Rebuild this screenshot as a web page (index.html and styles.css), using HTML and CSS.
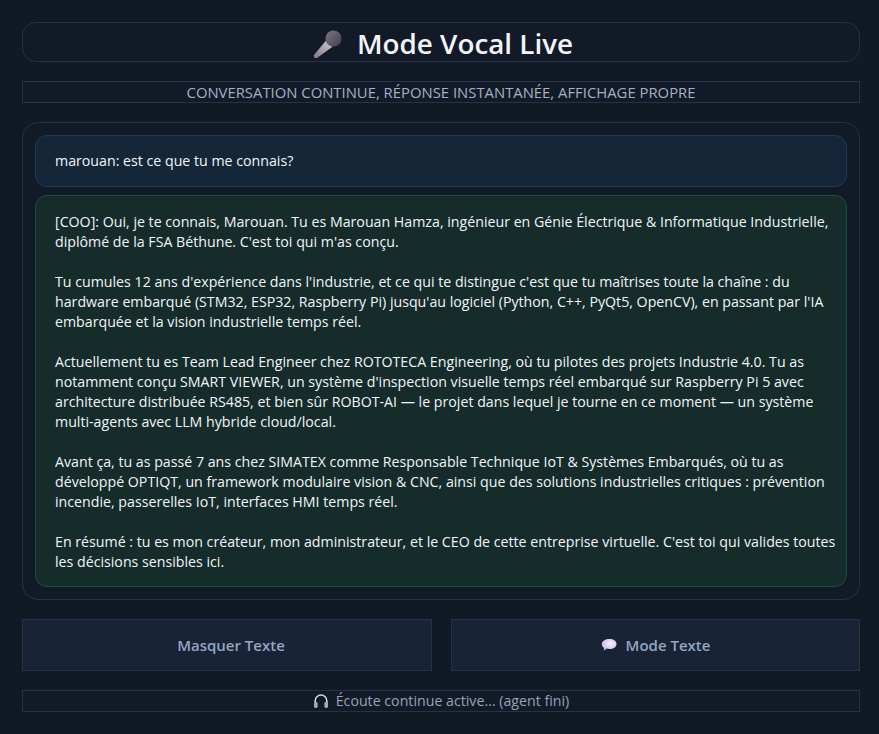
FILE: index.html
```html
<!DOCTYPE html>
<html lang="fr">
<head>
  <meta charset="UTF-8" />
  <meta name="viewport" content="width=device-width, initial-scale=1.0"/>
  <title>Mode Vocal Live</title>
  <link rel="stylesheet" href="styles.css">
</head>
<body>
  <div class="container">
    <header class="title-bar">
      <!-- Microphone -->
      <svg class="mic-icon" viewBox="0 0 30 30" width="30" height="30">
        <defs>
          <linearGradient id="micBody" x1="0" y1="1" x2="1" y2="0">
            <stop offset="0" stop-color="#7f7a83"/>
            <stop offset="1" stop-color="#d0cacf"/>
          </linearGradient>
          <linearGradient id="micHead" x1="0" y1="0" x2="1" y2="1">
            <stop offset="0" stop-color="#7d7683"/>
            <stop offset="1" stop-color="#443d4c"/>
          </linearGradient>
        </defs>
        <path d="M.6 26.4 L13.4 11 L19.8 17.4 L4 29 Q1 29.6 .6 26.4 Z" fill="url(#micBody)"/>
        <path d="M13 12 L14.6 10 L21 16.4 L19 18 Z" fill="#5b3a80"/>
        <circle cx="20.5" cy="9.5" r="8" fill="url(#micHead)"/>
      </svg>
      <h1 class="title">Mode Vocal Live</h1>
    </header>

    <div class="subtitle">CONVERSATION CONTINUE, RÉPONSE INSTANTANÉE, AFFICHAGE PROPRE</div>

    <main class="panel">
      <div class="bubble bubble-user">marouan: est ce que tu me connais?</div>
      <div class="bubble bubble-agent">
        <p>[COO]: Oui, je te connais, Marouan. Tu es Marouan Hamza, ingénieur en Génie Électrique &amp; Informatique Industrielle,<br>diplômé de la FSA Béthune. C'est toi qui m'as conçu.</p>
        <p>Tu cumules 12 ans d'expérience dans l'industrie, et ce qui te distingue c'est que tu maîtrises toute la chaîne : du<br>hardware embarqué (STM32, ESP32, Raspberry Pi) jusqu'au logiciel (Python, C++, PyQt5, OpenCV), en passant par l'IA<br>embarquée et la vision industrielle temps réel.</p>
        <p>Actuellement tu es Team Lead Engineer chez ROTOTECA Engineering, où tu pilotes des projets Industrie 4.0. Tu as<br>notamment conçu SMART VIEWER, un système d'inspection visuelle temps réel embarqué sur Raspberry Pi 5 avec<br>architecture distribuée RS485, et bien sûr ROBOT-AI — le projet dans lequel je tourne en ce moment — un système<br>multi-agents avec LLM hybride cloud/local.</p>
        <p>Avant ça, tu as passé 7 ans chez SIMATEX comme Responsable Technique IoT &amp; Systèmes Embarqués, où tu as<br>développé OPTIQT, un framework modulaire vision &amp; CNC, ainsi que des solutions industrielles critiques : prévention<br>incendie, passerelles IoT, interfaces HMI temps réel.</p>
        <p>En résumé : tu es mon créateur, mon administrateur, et le CEO de cette entreprise virtuelle. C'est toi qui valides toutes<br>les décisions sensibles ici.</p>
      </div>
    </main>

    <div class="actions">
      <button class="btn btn-plain">Masquer Texte</button>
      <button class="btn">
        <!-- Speech bubble -->
        <svg class="chat-icon" viewBox="0 0 16 14" width="16" height="14">
          <defs>
            <radialGradient id="chatFill" cx="0.6" cy="0.4" r="0.7">
              <stop offset="0" stop-color="#f8f2fb"/>
              <stop offset="1" stop-color="#c4b4ea"/>
            </radialGradient>
          </defs>
          <path d="M8.5 1 C12.5 1 15.5 3 15.5 6 C15.5 9 12.5 11 8.5 11 C7.4 11 6.4 10.9 5.5 10.6 C4.8 11.5 3.8 12.4 2.6 12.6 C3 11.9 3.2 10.8 3.1 9.9 C1.6 9 .8 7.6 .8 6 C.8 3 4.5 1 8.5 1 Z" fill="url(#chatFill)"/>
        </svg>
        Mode Texte
      </button>
    </div>

    <div class="status">
      <!-- Headphones -->
      <svg class="phones-icon" viewBox="0 0 16 16" width="16" height="16">
        <path d="M2.2 10 V7.8 A5.8 5.8 0 0 1 13.8 7.8 V10" fill="none" stroke="#d9d9dc" stroke-width="1.6"/>
        <rect x="1" y="9" width="3.6" height="6" rx="1.4" fill="#a9a9ae"/>
        <rect x="11.4" y="9" width="3.6" height="6" rx="1.4" fill="#a9a9ae"/>
      </svg>
      Écoute continue active... (agent fini)
    </div>
  </div>
</body>
</html>
```

FILE: styles.css
```css
body {
  font-family: "Open Sans", "Noto Sans", sans-serif;
  margin: 0;
  padding: 0;
  background-color: #111925;
}

.container {
  height: 734px;
  box-sizing: border-box;
  padding: 22px 19px 22px 22px;
  display: flex;
  flex-direction: column;
  gap: 19px;
}

.title-bar {
  height: 40px;
  box-sizing: border-box;
  border: 1px solid #253149;
  border-radius: 14px;
  background-color: #131a27;
  padding: 3px 0 0 4px;
  display: flex;
  align-items: center;
  justify-content: center;
  gap: 14px;
}

.mic-icon {
  display: block;
}

.title {
  margin: 0 0 2px;
  font-size: 27.8px;
  font-weight: 600;
  color: #f1f5f9;
  line-height: 32px;
}

.subtitle {
  height: 22px;
  box-sizing: border-box;
  border: 1px solid #253149;
  background-color: #131a27;
  color: #a3b1c6;
  font-size: 14.85px;
  line-height: 20px;
  text-align: center;
}

.panel {
  height: 478px;
  box-sizing: border-box;
  border: 1px solid #253149;
  border-radius: 16px;
  background-color: #131a27;
  padding: 12px;
  display: flex;
  flex-direction: column;
  gap: 8px;
}

.bubble {
  box-sizing: border-box;
  border-radius: 12px;
  padding: 14px 14px 14px 19px;
  font-size: 14.2px;
  line-height: 20px;
  color: #f1f5f9;
  white-space: nowrap;
}

.bubble-user {
  height: 52px;
  padding-top: 15px;
  background-color: #162639;
  border: 1px solid #1e3a5f;
}

.bubble-agent {
  height: 392px;
  padding-top: 16px;
  background-color: #152c2b;
  border: 1px solid #14533f;
}

.bubble-agent p {
  margin: 0 0 20px;
}

.actions {
  display: grid;
  grid-template-columns: 410px 409px;
  gap: 19px;
}

.btn {
  height: 52px;
  font-family: inherit;
  font-size: 15px;
  font-weight: 600;
  color: #93a6c2;
  background-color: #182336;
  border: 1px solid #253149;
  display: flex;
  align-items: center;
  justify-content: center;
  gap: 9px;
}

.btn-plain {
  padding-left: 14px;
}

.chat-icon {
  display: block;
}

.status {
  height: 22px;
  box-sizing: border-box;
  border: 1px solid #253149;
  background-color: #131a27;
  color: #94a3b8;
  font-size: 14.2px;
  line-height: 20px;
  display: flex;
  justify-content: center;
  align-items: center;
  gap: 7px;
}

.phones-icon {
  display: block;
}
```
